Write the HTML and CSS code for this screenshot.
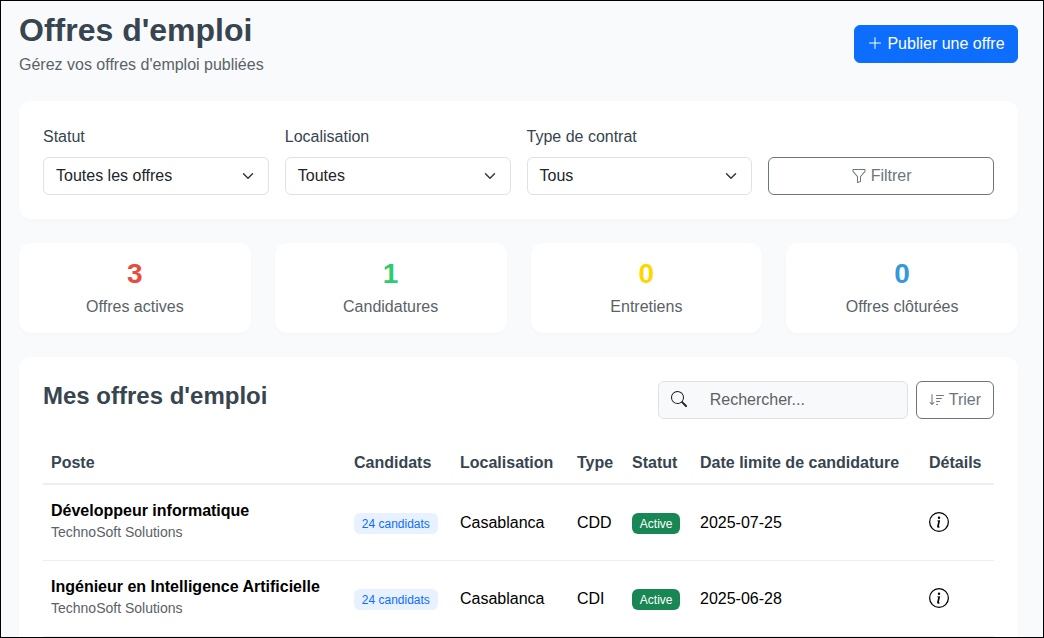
FILE: index.html
```html
<!DOCTYPE html>
<html lang="fr">
<head>
<meta charset="utf-8">
<title>Offres d'emploi</title>
<link rel="stylesheet" href="styles.css">
</head>
<body>
<div class="page">
  <header class="page-header">
    <div>
      <h1 class="title">Offres d'emploi</h1>
      <p class="subtitle">Gérez vos offres d'emploi publiées</p>
    </div>
    <button class="btn btn-primary" type="button">
      <svg class="icon" viewBox="0 0 16 16"><path fill-rule="evenodd" d="M8 2a.5.5 0 0 1 .5.5v5h5a.5.5 0 0 1 0 1h-5v5a.5.5 0 0 1-1 0v-5h-5a.5.5 0 0 1 0-1h5v-5A.5.5 0 0 1 8 2"/></svg>
      <span>Publier une offre</span>
    </button>
  </header>

  <section class="card filters">
    <div class="field">
      <div class="label">Statut</div>
      <div class="select"><span>Toutes les offres</span><svg class="chevron" viewBox="0 0 16 16"><path d="m2 5 6 6 6-6"/></svg></div>
    </div>
    <div class="field">
      <div class="label">Localisation</div>
      <div class="select"><span>Toutes</span><svg class="chevron" viewBox="0 0 16 16"><path d="m2 5 6 6 6-6"/></svg></div>
    </div>
    <div class="field">
      <div class="label">Type de contrat</div>
      <div class="select"><span>Tous</span><svg class="chevron" viewBox="0 0 16 16"><path d="m2 5 6 6 6-6"/></svg></div>
    </div>
    <button class="btn btn-outline" type="button">
      <svg class="icon" viewBox="0 0 16 16"><path d="M1.5 1.5A.5.5 0 0 1 2 1h12a.5.5 0 0 1 .5.5v2a.5.5 0 0 1-.128.334L10 8.692V13.5a.5.5 0 0 1-.342.474l-3 1A.5.5 0 0 1 6 14.5V8.692L1.628 3.834A.5.5 0 0 1 1.5 3.5zm1 .5v1.308l4.372 4.858A.5.5 0 0 1 7 8.5v5.306l2-.666V8.5a.5.5 0 0 1 .128-.334L13.5 3.308V2z"/></svg>
      <span>Filtrer</span>
    </button>
  </section>

  <section class="stats">
    <div class="card stat"><div class="stat-value red">3</div><div class="stat-label">Offres actives</div></div>
    <div class="card stat"><div class="stat-value green">1</div><div class="stat-label">Candidatures</div></div>
    <div class="card stat"><div class="stat-value yellow">0</div><div class="stat-label">Entretiens</div></div>
    <div class="card stat"><div class="stat-value blue">0</div><div class="stat-label">Offres clôturées</div></div>
  </section>

  <section class="card offers">
    <div class="offers-header">
      <h2 class="offers-title">Mes offres d'emploi</h2>
      <div class="tools">
        <div class="search">
          <svg class="icon" viewBox="0 0 16 16"><path d="M11.742 10.344a6.5 6.5 0 1 0-1.397 1.398h-.001q.044.06.098.115l3.85 3.85a1 1 0 0 0 1.415-1.414l-3.85-3.85a1 1 0 0 0-.115-.1zM12 6.5a5.5 5.5 0 1 1-11 0 5.5 5.5 0 0 1 11 0"/></svg>
          <span>Rechercher...</span>
        </div>
        <button class="btn btn-outline" type="button">
          <svg class="icon" viewBox="0 0 16 16"><path d="M3.5 2.5a.5.5 0 0 0-1 0v8.793l-1.146-1.147a.5.5 0 0 0-.708.708l2 1.999.007.007a.497.497 0 0 0 .7-.006l2-2a.5.5 0 0 0-.707-.708L3.5 11.293zm3.5 1a.5.5 0 0 1 .5-.5h7a.5.5 0 0 1 0 1h-7a.5.5 0 0 1-.5-.5M7.5 6a.5.5 0 0 0 0 1h5a.5.5 0 0 0 0-1zm0 3a.5.5 0 0 0 0 1h3a.5.5 0 0 0 0-1zm0 3a.5.5 0 0 0 0 1h1a.5.5 0 0 0 0-1z"/></svg>
          <span>Trier</span>
        </button>
      </div>
    </div>

    <table class="table">
      <colgroup><col class="c-post"><col class="c-cand"><col class="c-loc"><col class="c-type"><col class="c-status"><col class="c-date"><col></colgroup>
      <thead>
        <tr><th>Poste</th><th>Candidats</th><th>Localisation</th><th>Type</th><th>Statut</th><th>Date limite de candidature</th><th>Détails</th></tr>
      </thead>
      <tbody>
        <tr>
          <td><div class="job">Développeur informatique</div><div class="company">TechnoSoft Solutions</div></td>
          <td><span class="badge badge-soft">24 candidats</span></td>
          <td>Casablanca</td><td>CDD</td>
          <td><span class="badge badge-active">Active</span></td>
          <td>2025-07-25</td>
          <td><svg class="info" viewBox="0 0 16 16"><path d="M8 15A7 7 0 1 1 8 1a7 7 0 0 1 0 14m0 1A8 8 0 1 0 8 0a8 8 0 0 0 0 16"/><path d="m8.93 6.588-2.29.287-.082.38.45.083c.294.07.352.176.288.469l-.738 3.468c-.194.897.105 1.319.808 1.319.545 0 1.178-.252 1.465-.598l.088-.416c-.2.176-.492.246-.686.246-.275 0-.375-.193-.304-.533zM9 4.5a1 1 0 1 1-2 0 1 1 0 0 1 2 0"/></svg></td>
        </tr>
        <tr>
          <td><div class="job">Ingénieur en Intelligence Artificielle</div><div class="company">TechnoSoft Solutions</div></td>
          <td><span class="badge badge-soft">24 candidats</span></td>
          <td>Casablanca</td><td>CDI</td>
          <td><span class="badge badge-active">Active</span></td>
          <td>2025-06-28</td>
          <td><svg class="info" viewBox="0 0 16 16"><path d="M8 15A7 7 0 1 1 8 1a7 7 0 0 1 0 14m0 1A8 8 0 1 0 8 0a8 8 0 0 0 0 16"/><path d="m8.93 6.588-2.29.287-.082.38.45.083c.294.07.352.176.288.469l-.738 3.468c-.194.897.105 1.319.808 1.319.545 0 1.178-.252 1.465-.598l.088-.416c-.2.176-.492.246-.686.246-.275 0-.375-.193-.304-.533zM9 4.5a1 1 0 1 1-2 0 1 1 0 0 1 2 0"/></svg></td>
        </tr>
      </tbody>
    </table>
  </section>
</div>
</body>
</html>
```

FILE: styles.css
```css
* { box-sizing: border-box; }

body {
  margin: 0;
  font: 16px/24px "Liberation Sans", Arial, sans-serif;
  color: #000;
}

.page {
  height: 638px;
  overflow: hidden;
  border: 1px solid #000;
  background: #f9fafc;
  padding: 9px 25px 0 18px;
}

.page-header {
  display: flex;
  justify-content: space-between;
  align-items: center;
  height: 67px;
  margin-bottom: 24px;
}

.title {
  margin: 0 0 4px;
  padding-top: 1px;
  font-size: 32px;
  line-height: 38px;
  color: #36454f;
}

.subtitle { margin: 0; color: #5a6268; }

.btn {
  display: flex;
  align-items: center;
  justify-content: center;
  gap: 4px;
  height: 38px;
  padding: 0 12px;
  border: 1px solid;
  border-radius: 6px;
  font: inherit;
}

.btn .icon { margin-bottom: 1px; }
.btn-primary { width: 164px; background: #0d6efd; border-color: #0d6efd; color: #fff; }
.btn-outline { background: #fff; border-color: #6c757d; color: #6c757d; }

.icon { width: 16px; height: 16px; fill: currentColor; flex: none; }

.card {
  background: #fff;
  border-radius: 12px;
  box-shadow: 0 2px 4px rgba(0, 0, 0, 0.02);
}

.filters {
  display: grid;
  grid-template-columns: repeat(4, 1fr);
  gap: 16px;
  align-items: end;
  height: 118px;
  padding: 24px;
  margin-bottom: 24px;
}

.label { margin-bottom: 8px; color: #36454f; }

.select {
  display: flex;
  align-items: center;
  justify-content: space-between;
  height: 38px;
  padding: 0 12px 0 12px;
  border: 1px solid #dee2e6;
  border-radius: 6px;
  color: #212529;
}

.chevron {
  width: 16px;
  height: 12px;
  fill: none;
  stroke: #343a40;
  stroke-width: 2;
  stroke-linecap: round;
  stroke-linejoin: round;
}

.stats {
  display: grid;
  grid-template-columns: repeat(4, 1fr);
  gap: 24px;
  margin-bottom: 24px;
}

.stat { height: 90px; padding: 14px 0 0; text-align: center; }
.stat-value { font-size: 28px; font-weight: 700; line-height: 33px; margin-bottom: 5px; }
.stat-label { color: #5a6268; }

.red { color: #e74c3c; }
.green { color: #2ecc71; }
.yellow { color: #ffd700; }
.blue { color: #3498db; }

.offers { height: 400px; padding: 24px 24px 0; }

.offers-header {
  display: flex;
  justify-content: space-between;
  height: 38px;
  margin-bottom: 24px;
}

.offers-title { margin: 0; font-size: 24px; line-height: 29px; color: #36454f; }

.tools { display: flex; gap: 8px; }

.search {
  display: flex;
  align-items: center;
  gap: 23px;
  width: 250px;
  padding: 0 12px;
  border: 1px solid #dee2e6;
  border-radius: 6px;
  background: #f8f9fa;
  color: #5a6268;
}

.search .icon { margin-bottom: 2px; color: #212529; }

.table { width: 100%; table-layout: fixed; border-collapse: separate; border-spacing: 0; }
.c-post { width: 303px; }
.c-cand { width: 106px; }
.c-loc { width: 117px; }
.c-type { width: 55px; }
.c-status { width: 68px; }
.c-date { width: 229px; }

th {
  height: 42px;
  padding: 0 8px;
  text-align: left;
  white-space: nowrap;
  color: #36454f;
  border-bottom: 2px solid #eee;
}

td {
  height: 76px;
  padding: 0 8px;
  white-space: nowrap;
  vertical-align: middle;
  border-bottom: 1px solid #eee;
}

.job { font-weight: 700; line-height: 23px; }
.company { padding-bottom: 4px; font-size: 14px; line-height: 21px; color: #5a6268; }

.badge {
  display: inline-block;
  padding: 4.2px 7.8px;
  border-radius: 6px;
  font-size: 12px;
  line-height: 12px;
}

.badge-soft { background: #e7f1ff; color: #0d6efd; }
.badge-active { background: #198754; color: #fff; }

.info { display: block; width: 20px; height: 20px; margin-bottom: 2px; }
```
